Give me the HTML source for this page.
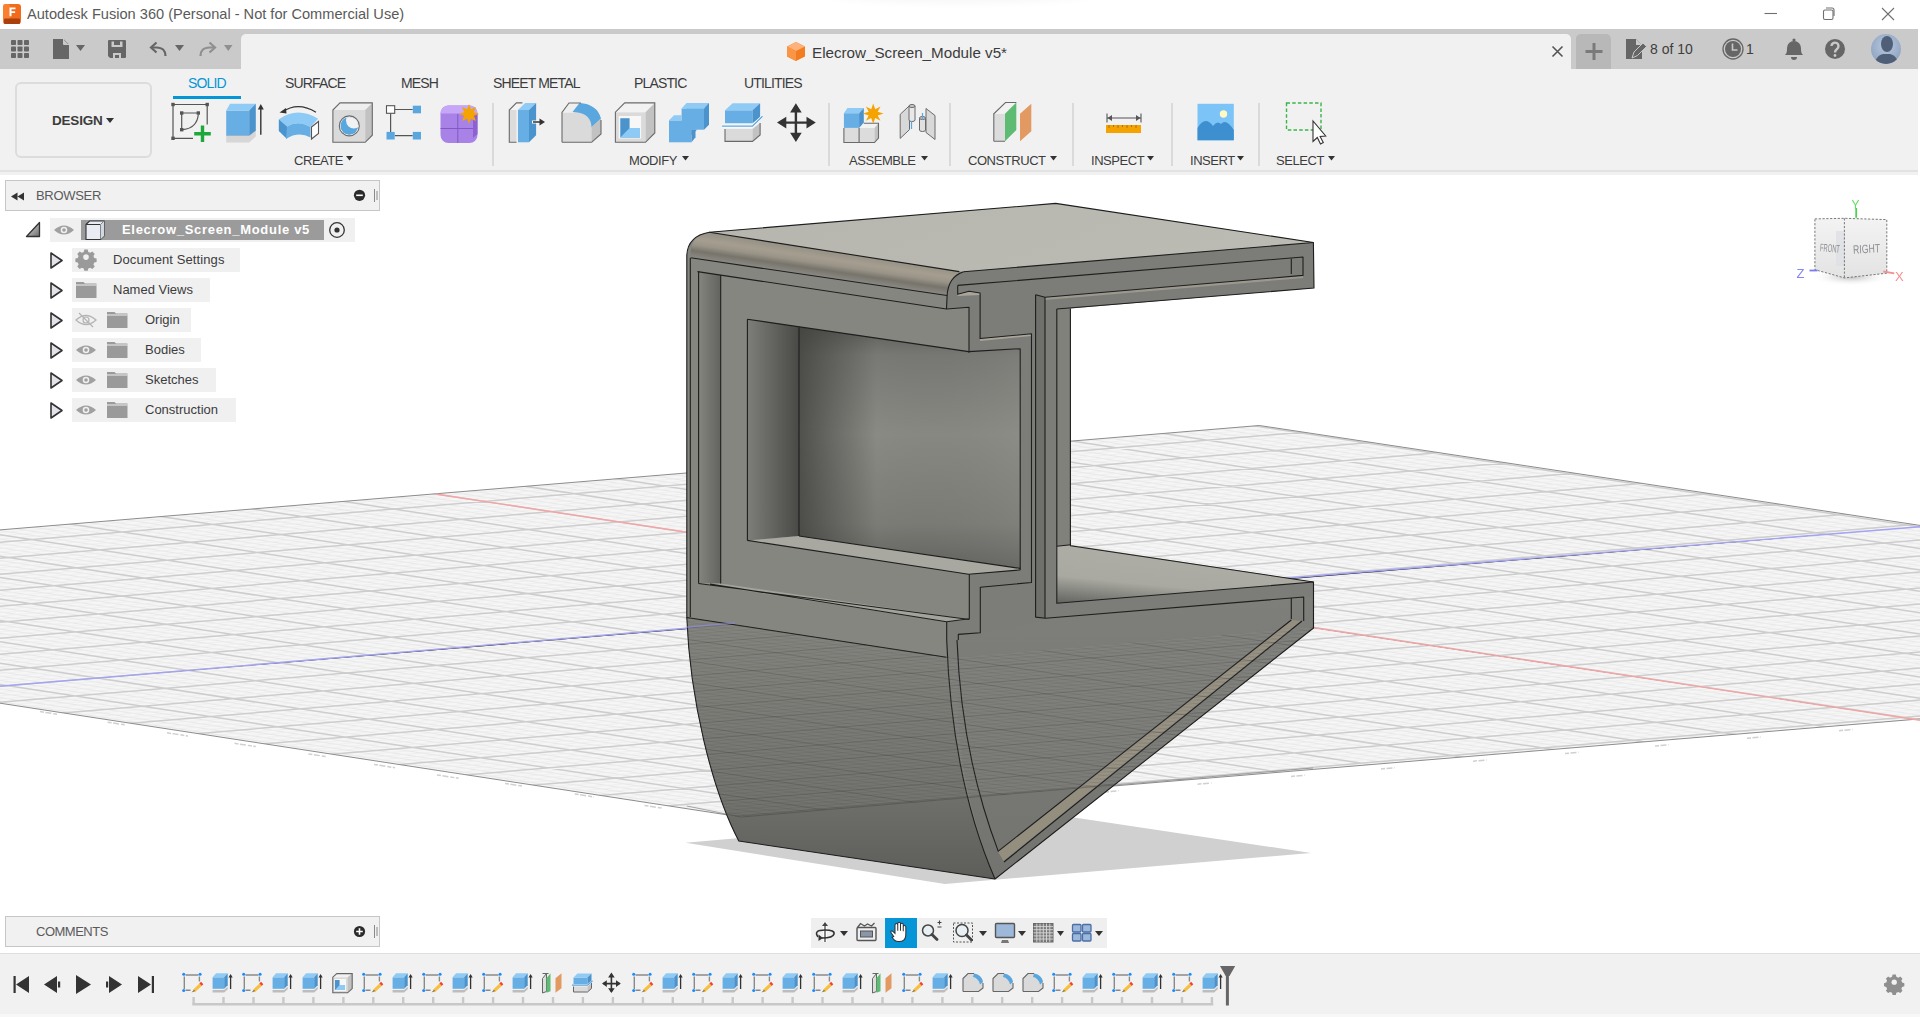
<!DOCTYPE html>
<html><head><meta charset="utf-8">
<style>
*{margin:0;padding:0;box-sizing:border-box}
html,body{width:1920px;height:1017px;overflow:hidden;background:#fff;font-family:"Liberation Sans",sans-serif;color:#3c3c3c}
.a{position:absolute}
svg{position:absolute;overflow:visible}
.t{position:absolute;white-space:nowrap;line-height:1}
#tabbar{left:0;top:29px;width:1918px;height:40px;background:#cacaca}
#doctab{left:241px;top:34px;width:1330px;height:35px;background:#f1f1f1;border-radius:5px 5px 0 0}
#plusbtn{left:1576px;top:34px;width:35px;height:35px;background:#b8b8b8;border-radius:5px 5px 0 0}
#toolbar{left:0;top:69px;width:1918px;height:106px;background:#f1f1f1}
#tbline{left:0;top:170px;width:1918px;height:2px;background:#e2e2e2}
.tab{top:75.8px;font-size:14px;letter-spacing:-0.85px;color:#3c3c3c}
.lbl{top:154px;font-size:13px;letter-spacing:-0.45px;color:#3c3c3c}
.sep{top:103px;width:2px;height:63px;background:#dadada}
#timeline{left:0;top:953px;width:1920px;height:64px;background:#f1f1f1;border-top:1px solid #dedede}
</style></head><body>
<!-- TITLE BAR -->
<svg style="left:0;top:0" width="1" height="1">
 <rect x="3" y="4" width="18" height="20" rx="3" fill="#f26b1d"/>
 <rect x="3" y="4" width="7" height="20" rx="2" fill="#ff8c3a" opacity=".6"/>
 <rect x="4" y="18.5" width="16" height="5.5" rx="1" fill="#a8410e"/>
 <path d="M9.5 7.5h6v1.8h-4v1.9h3.6v1.8h-3.6v3.2h-2z" fill="#fff"/>
 <g stroke="#707070" stroke-width="1.1" fill="none">
  <path d="M1764.5 13.5h12.5"/>
  <rect x="1823.5" y="10" width="9.5" height="9.5" rx="1.5"/>
  <path d="M1826 8h6a2 2 0 0 1 2 2v6"/>
  <path d="M1882 8l12 12M1894 8l-12 12"/>
 </g>
</svg>
<div class="a" style="left:830px;top:-16px;width:260px;height:16px;border-radius:50%;box-shadow:0 0 10px 2px rgba(0,0,0,.045)"></div>
<div class="t" style="left:27px;top:7px;font-size:14.6px;color:#5a5a5a">Autodesk Fusion 360 (Personal - Not for Commercial Use)</div>

<!-- TAB BAR -->
<div id="tabbar" class="a"></div>
<div id="doctab" class="a"></div>
<div id="plusbtn" class="a"></div>
<svg style="left:0;top:0" width="1" height="1">
 <g fill="#666">
  <rect x="11" y="40" width="5" height="5" rx=".8"/><rect x="17.5" y="40" width="5" height="5" rx=".8"/><rect x="24" y="40" width="5" height="5" rx=".8"/>
  <rect x="11" y="46.5" width="5" height="5" rx=".8"/><rect x="17.5" y="46.5" width="5" height="5" rx=".8"/><rect x="24" y="46.5" width="5" height="5" rx=".8"/>
  <rect x="11" y="53" width="5" height="5" rx=".8"/><rect x="17.5" y="53" width="5" height="5" rx=".8"/><rect x="24" y="53" width="5" height="5" rx=".8"/>
  <path d="M53 39h10.5l5.5 5.5v14.5h-16z"/>
  <path d="M76 45h9l-4.5 6z"/>
  <path d="M108 41a1 1 0 0 1 1-1h16a1 1 0 0 1 1 1v16a1 1 0 0 1-1 1h-15l-2-2zM111.5 41.5v5.5h11v-5.5h-2.5v3.5h-6v-3.5zM113 58v-5h8v5h-2v-3h-4v3z" fill-rule="evenodd"/>
  <path d="M175 45h9l-4.5 6z"/>
  <path d="M224 45h8.5l-4.25 6z" fill="#8f8f8f"/>
 </g>
 <path d="M63.5 39.5v5h5" fill="#c9c9c9"/>
 <path d="M63.5 39v5.5h5.5" fill="none" stroke="#c9c9c9" stroke-width="1"/>
 <path d="M165.5 56c0-5-3-8.5-9-8.5h-4.5" fill="none" stroke="#666" stroke-width="2.2"/>
 <path d="M156.5 42.5l-5.5 5 5.5 5" fill="none" stroke="#666" stroke-width="2.2"/>
 <path d="M200.5 56c0-5 3-8.5 9-8.5h4.5" fill="none" stroke="#8f8f8f" stroke-width="2.2"/>
 <path d="M209.5 42.5l5.5 5-5.5 5" fill="none" stroke="#8f8f8f" stroke-width="2.2"/>
</svg>
<!-- doc title -->
<svg style="left:0;top:0" width="1" height="1">
 <path d="M796 42l9 4.5v10l-9 4.5-9-4.5v-10z" fill="#f47c20"/>
 <path d="M796 42l9 4.5-9 4.5-9-4.5z" fill="#ffb27a"/>
 <path d="M787 46.5l9 4.5v10l-9-4.5z" fill="#f99545"/>
 <path d="M1552.5 46.5l10 10M1562.5 46.5l-10 10" stroke="#555" stroke-width="1.6"/>
 <path d="M1594 43v17M1585.5 51.5h17" stroke="#7a7a7a" stroke-width="3"/>
</svg>
<div class="t" style="left:812px;top:45px;font-size:15.2px;color:#3c3c3c">Elecrow_Screen_Module v5*</div>
<!-- right header -->
<svg style="left:0;top:0" width="1" height="1">
 <path d="M1626 39h10l6 6v14h-16z" fill="#666"/>
 <path d="M1636 39v6h6" fill="#c9c9c9"/>
 <path d="M1632 58l2-6 9-9 3.5 3.5-9 9z" fill="#666" stroke="#c9c9c9" stroke-width="1"/>
 <circle cx="1733" cy="49" r="10" fill="none" stroke="#666" stroke-width="1.3"/>
 <circle cx="1733" cy="49" r="8" fill="#666"/>
 <path d="M1732.5 43.5v6.5h5" fill="none" stroke="#c9c9c9" stroke-width="1.6"/>
 <path d="M1785 55c2-2 2-4 2-7a7 7 0 0 1 14 0c0 3 0 5 2 7z" fill="#666"/>
 <circle cx="1794" cy="40" r="1.6" fill="#666"/>
 <path d="M1791 57a3 3 0 0 0 6 0z" fill="#666"/>
 <circle cx="1835" cy="49" r="10" fill="#666"/>
 <path d="M1831.5 46a3.5 3.5 0 1 1 5.5 3c-1.5 1-2 1.5-2 3.5" fill="none" stroke="#c9c9c9" stroke-width="2.4"/>
 <circle cx="1835" cy="55.5" r="1.4" fill="#c9c9c9"/>
 <defs><radialGradient id="av" cx=".5" cy=".4" r=".6"><stop offset="0" stop-color="#b9c9de"/><stop offset="1" stop-color="#8fa4c2"/></radialGradient>
 <clipPath id="avc"><circle cx="1886" cy="49" r="15"/></clipPath></defs>
 <circle cx="1886" cy="49" r="15" fill="url(#av)"/>
 <g clip-path="url(#avc)" fill="#4f5f78">
  <ellipse cx="1887" cy="44" rx="6" ry="8"/>
  <path d="M1874 66c1-8 5-11 9-12h7c4 1 8 4 9 12z"/>
 </g>
</svg>
<div class="t" style="left:1650px;top:42px;font-size:14px;color:#3e3e3e">8 of 10</div>
<div class="t" style="left:1746px;top:42px;font-size:14px;color:#3e3e3e">1</div>

<!-- TOOLBAR -->
<div id="toolbar" class="a"></div>
<div id="tbline" class="a"></div>
<div class="a" style="left:15px;top:82px;width:137px;height:76px;border:2px solid #dcdcdc;border-radius:6px"></div>
<div class="t" style="left:52px;top:114px;font-size:13.5px;font-weight:bold;color:#3c3c3c;letter-spacing:-0.2px">DESIGN</div>
<svg style="left:0;top:0" width="1" height="1"><path d="M106 118h8l-4 5z" fill="#333"/></svg>

<div class="t tab" style="left:188px;color:#0696d7">SOLID</div>
<div class="a" style="left:173px;top:96px;width:68px;height:3px;background:#0696d7"></div>
<div class="t tab" style="left:285px">SURFACE</div>
<div class="t tab" style="left:401px">MESH</div>
<div class="t tab" style="left:493px">SHEET METAL</div>
<div class="t tab" style="left:634px">PLASTIC</div>
<div class="t tab" style="left:744px">UTILITIES</div>

<div class="t lbl" style="left:294px">CREATE</div>
<div class="t lbl" style="left:629px">MODIFY</div>
<div class="t lbl" style="left:849px">ASSEMBLE</div>
<div class="t lbl" style="left:968px">CONSTRUCT</div>
<div class="t lbl" style="left:1091px">INSPECT</div>
<div class="t lbl" style="left:1190px">INSERT</div>
<div class="t lbl" style="left:1276px">SELECT</div>
<div class="a sep" style="left:492px"></div>
<div class="a sep" style="left:828px"></div>
<div class="a sep" style="left:949px"></div>
<div class="a sep" style="left:1072px"></div>
<div class="a sep" style="left:1171px"></div>
<div class="a sep" style="left:1258px"></div>
<svg style="left:0;top:0" width="1" height="1">
 <defs>
  <linearGradient id="bl" x1="0" y1="0" x2="0" y2="1"><stop offset="0" stop-color="#6ab4e8"/><stop offset="1" stop-color="#5ba7df"/></linearGradient>
 </defs>
 <!-- arrows after labels -->
 <g fill="#333">
  <path d="M346 156h7l-3.5 4.5z"/><path d="M682 156h7l-3.5 4.5z"/><path d="M921 156h7l-3.5 4.5z"/>
  <path d="M1050 156h7l-3.5 4.5z"/><path d="M1147 156h7l-3.5 4.5z"/><path d="M1237 156h7l-3.5 4.5z"/><path d="M1328 156h7l-3.5 4.5z"/>
 </g>
 <!-- sketch -->
 <g stroke="#555" stroke-width="1.2" fill="none">
  <path d="M173 104.5h34.2M173 104.5v34M173 138.3h20M207.2 104.5v20"/>
  <path d="M181.7 113h16.6M181.7 113v16.7M198.3 114.5Q197 128 183 129.7"/>
 </g>
 <g fill="#555">
  <rect x="171.3" y="102.8" width="3.4" height="3.4"/><rect x="205.5" y="102.8" width="3.4" height="3.4"/><rect x="171.3" y="136.6" width="3.4" height="3.4"/>
  <rect x="180" y="111.3" width="3.4" height="3.4"/><rect x="196.6" y="111.3" width="3.4" height="3.4"/><rect x="180" y="128" width="3.4" height="3.4"/>
 </g>
 <path d="M202.5 125.5v16.6M194.2 133.8h16.6" stroke="#1fa83a" stroke-width="3.4"/>
 <!-- extrude -->
 <path d="M226.2 135.5h23l6.6-5v6l-6.6 6h-23z" fill="#d6d6d6"/>
 <path d="M226.2 135.5h23l6.6-5" fill="none" stroke="#bdbdbd" stroke-width="1"/>
 <path d="M226.2 110.5h23v25h-23z" fill="#66aee4"/>
 <path d="M226.2 110.5l3.8-6.7h25.8l-6.6 6.7z" fill="#8fcbf5"/>
 <path d="M249.2 110.5l6.6-6.7v26.7l-6.6 5z" fill="#4a93cc"/>
 <path d="M260.8 134.7v-28" stroke="#333" stroke-width="1.4"/><path d="M257.8 109.5l3-5.5 3 5.5z" fill="#333"/>
 <!-- revolve -->
 <path d="M282 112Q298 101 316 112.2" fill="none" stroke="#333" stroke-width="1.3"/>
 <path d="M279.5 112.5l6.5-4.5 0.5 5.5z" fill="#333"/>
 <path d="M278.8 119.3Q297.4 106 318.1 118.8L310.5 127Q298.4 120 287 126.5z" fill="#8dcaf5"/>
 <path d="M278.8 119.3L287 126.5v12.5l-8.2-8z" fill="#4a93cc"/>
 <path d="M287 126.5Q298.4 120 310.5 127v10.4Q298.4 131 286 139z" fill="#66aee4"/>
 <path d="M311.5 127l7-5.5v12l-7 5.5z" fill="#fff" stroke="#555" stroke-width="1.1"/>
 <!-- hole -->
 <path d="M332.9 110h32.3v32.3h-32.3z" fill="#dadada"/>
 <path d="M332.9 110l7.1-7.1h32.3l-7.1 7.1z" fill="#efefef"/>
 <path d="M365.2 110l7.1-7.1v32.3l-7.1 7.1z" fill="#c2c2c2"/>
 <path d="M332.9 110l7.1-7.1h32.3v32.3l-7.1 7.1h-32.3z" fill="none" stroke="#6a6a6a" stroke-width="1.1"/>
 <circle cx="349.3" cy="125.9" r="10" fill="#f2f2f2" stroke="#6a6a6a" stroke-width="1.1"/>
 <clipPath id="hc"><circle cx="349.3" cy="125.9" r="9"/></clipPath><g clip-path="url(#hc)"><circle cx="349.3" cy="125.9" r="9" fill="#5aa6df"/><circle cx="354" cy="120.5" r="8" fill="#f2f2f2"/></g>
 <!-- pattern -->
 <path d="M394.7 109.5h18M390.6 113.3v18.6M394.7 135.7h18" stroke="#555" stroke-width="1.2"/>
 <rect x="386.5" y="105.7" width="8.2" height="7.6" fill="#fff" stroke="#555" stroke-width="1.1"/>
 <rect x="412.8" y="105.7" width="8.2" height="7.6" fill="#5aa6df"/>
 <rect x="386.5" y="131.9" width="8.2" height="7.6" fill="#5aa6df"/>
 <rect x="412.8" y="131.9" width="8.2" height="7.6" fill="#5aa6df"/>
 <!-- form -->
 <rect x="440.5" y="105.5" width="37" height="37.5" rx="8" fill="#a982e8"/>
 <path d="M448 105.5h22a8 8 0 0 1 7.5 8h-37a8 8 0 0 1 7.5-8z" fill="#c6a6f7"/>
 <path d="M473 114v24l4.5-4v-20z" fill="#8d62d0"/>
 <path d="M457.8 114v29M440.5 128.5h32.5" stroke="#7e55bd" stroke-width=".9"/>
 <path d="M469 104l1.8 5.2 5.2-2.2-2.2 5.2 5.3 1.8-5.3 1.8 2.2 5.2-5.2-2.2-1.8 5.2-1.8-5.2-5.2 2.2 2.2-5.2-5.3-1.8 5.3-1.8-2.2-5.2 5.2 2.2z" fill="#f5a300"/>
 <!-- press pull -->
 <path d="M509.3 110h7.1v32.3h-7.1z" fill="#dcdcdc"/>
 <path d="M509.3 110l7.1-7.1h6l-6 7.1z" fill="#f4f4f4"/>
 <path d="M516.5 142.3h-7.2V110l7.1-7.1h6" fill="none" stroke="#6a6a6a" stroke-width="1.1"/>
 <path d="M518 110h11v32.3h-11z" fill="#66aee4"/>
 <path d="M518 110l7.2-7.1h10.9l-7.1 7.1z" fill="#8fcbf5"/>
 <path d="M529 110l7.1-7.1v32.3l-7.1 7.1z" fill="#4a93cc"/>
 <path d="M532 122h8" stroke="#fff" stroke-width="3"/>
 <path d="M533 122h7" stroke="#333" stroke-width="1.5"/><path d="M539.5 118.5l5.5 3.5-5.5 3.5z" fill="#333"/>
 <!-- fillet -->
 <path d="M562 112.5h15Q591.5 113 591.5 127v15.3H562z" fill="#dadada"/>
 <path d="M562 112.5l7-9.5h12Q597 104 601 118.5l-9.5 8.5Q591.5 113 577 112.5z" fill="#efefef"/>
 <path d="M577 112.5l-4.5-0.5 7-9Q597 104 601 118.5l-9.5 9Q591 114 577 112.5z" fill="#5aa6df"/>
 <path d="M591.5 127l9.5-8.5v15.5l-9.5 8.3z" fill="#c2c2c2"/>
 <path d="M562 142.3V112.5l7-9.5h12M591.5 142.3h-29.5M591.5 142.3l9.5-8.3v-14" fill="none" stroke="#6a6a6a" stroke-width="1.1"/>
 <!-- shell -->
 <path d="M615.4 112.2h30.1v30.1h-30.1z" fill="#dadada"/>
 <path d="M615.4 112.2l9.3-9.3h30.1l-9.3 9.3z" fill="#f2f2f2"/>
 <path d="M645.5 112.2l9.3-9.3V133l-9.3 9.3z" fill="#c2c2c2"/>
 <path d="M615.4 142.3v-30.1l9.3-9.3h30.1V133l-9.3 9.3z" fill="none" stroke="#6a6a6a" stroke-width="1.1"/>
 <rect x="618.7" y="116" width="22.4" height="22.5" fill="#f7f7f7"/>
 <path d="M620.3 118.2h9.3v9.8h10.4v9.4h-19.7z" fill="#4a93cc"/>
 <path d="M620.3 137.4l9.3-9.4h10.4v9.4z" fill="#8dcaf5"/>
 <!-- combine -->
 <path d="M669 120.4l5-5h12v-7l5-5h17.5v0l-4.5 5v0" fill="#8dcaf5"/>
 <path d="M669 120.4h22.5v21.9H669z" fill="#66aee4"/>
 <path d="M681.6 108.4H704v21.3h-22.4z" fill="#66aee4"/>
 <path d="M681.6 108.4l4.9-5.5H709l-5 5.5z" fill="#8fcbf5"/>
 <path d="M669 120.4l5-4.9h7.6v4.9z" fill="#8fcbf5"/>
 <path d="M704 108.4l5-5.5v21.9l-5 4.9z" fill="#4a93cc"/>
 <path d="M691.5 129.7h5.5l-5.5 5.5z" fill="#4a93cc"/><path d="M691.5 129.7h4v7.5l-4 5.1z" fill="#4a93cc"/>
 <!-- split -->
 <path d="M725 110.3h27.5v12.9H725z" fill="#66aee4"/>
 <path d="M725 110.3l7.6-7h27.5l-7.6 7z" fill="#8fcbf5"/>
 <path d="M752.5 110.3l7.6-7v14l-7.6 5.9z" fill="#4a93cc"/>
 <path d="M722 126.1h30.5l10-9.9" fill="none" stroke="#fff" stroke-width="2.6"/>
 <path d="M722 126.1h30.5l10-9.9" fill="none" stroke="#5aa6df" stroke-width="1.3"/>
 <path d="M725 129h27.5v12.4H725z" fill="#dadada"/>
 <path d="M752.5 129l7.6-5.9v11.8l-7.6 6.5z" fill="#c2c2c2"/>
 <path d="M725 129v12.4h27.5l7.6-6.5v-11.8" fill="none" stroke="#6a6a6a" stroke-width="1.1"/>
 <!-- move -->
 <path d="M795.9 108v29.5M782 122.6h28" stroke="#333" stroke-width="2.4"/>
 <path d="M795.9 103.3l5.8 9.3h-11.6zM795.9 142l5.8-9.3h-11.6zM777 122.6l9.3-5.8v11.6zM815.8 122.6l-9.3-5.8v11.6z" fill="#333"/>
 <!-- new component -->
 <path d="M843.9 128h30.6v14.5h-30.6z" fill="#dcdcdc"/>
 <path d="M859.1 128l4.7-4.7h14.7l-4.1 4.7z" fill="#f2f2f2"/>
 <path d="M874.5 128l4-4.7v14.7l-4 4.5z" fill="#c2c2c2"/>
 <path d="M843.9 128v14.5h30.6l4-4.5v-14.7h-14.7M859.1 128v14.5" fill="none" stroke="#6a6a6a" stroke-width="1.1"/>
 <path d="M843.9 113.2h15.2v14.7h-15.2z" fill="#66aee4"/>
 <path d="M843.9 113.2l3.5-5.2h16.4l-4.7 5.2z" fill="#8fcbf5"/>
 <path d="M859.1 113.2l4.7-5.2v14.6l-4.7 5.3z" fill="#4a93cc"/>
 <path d="M873.2 103.5l2 5.7 5.3-2.8-2.8 5.3 5.8 1.9-5.8 1.9 2.8 5.3-5.3-2.8-2 5.7-2-5.7-5.3 2.8 2.8-5.3-5.8-1.9 5.8-1.9-2.8-5.3 5.3 2.8z" fill="#f5a300"/>
 <!-- joint -->
 <path d="M900.2 114.4l9.3-8.8v24l-9.3 8.8z" fill="#d8d8d8" stroke="#6a6a6a" stroke-width="1"/>
 <path d="M909 106v14a3 1.5 0 0 0 6 0v-14" fill="#e8e8e8" stroke="#6a6a6a" stroke-width="1"/>
 <ellipse cx="912" cy="106" rx="3" ry="1.5" fill="#ccc" stroke="#6a6a6a" stroke-width="1"/>
 <path d="M926 108.5l9 7v24l-9-7z" fill="#d8d8d8" stroke="#6a6a6a" stroke-width="1"/>
 <path d="M919.5 118v12a3 1.5 0 0 0 6 0v-12" fill="#e0e0e0" stroke="#6a6a6a" stroke-width="1"/>
 <ellipse cx="922.5" cy="118" rx="3" ry="1.5" fill="#ccc" stroke="#6a6a6a" stroke-width="1"/>
 <path d="M922.5 113v7M911.5 121v8" stroke="#5aa6df" stroke-width="1.2"/>
 <!-- construct -->
 <path d="M993.8 113.8h11.2v27.5h-11.2z" fill="#dcdcdc"/>
 <path d="M993.8 113.8l11.7-11.3h10.8l-11.3 11.3z" fill="#f2f2f2"/>
 <path d="M1005 113.8l11.3-11.3V130L1005 141.3z" fill="#5dbb73"/>
 <path d="M993.8 141.3V113.8l11.7-11.3h10.8M993.8 141.3H1005" fill="none" stroke="#6a6a6a" stroke-width="1.1"/>
 <path d="M1020 113.8l11.3-10v27.5L1020 141.3z" fill="#e29a62"/>
 <!-- inspect -->
 <path d="M1107 118h34" stroke="#555" stroke-width="1.1"/>
 <path d="M1107 113.5v9M1141 113.5v9" stroke="#555" stroke-width="1.1"/>
 <path d="M1107.5 118l4.5-3v6zM1140.5 118l-4.5-3v6z" fill="#555"/>
 <rect x="1106" y="125" width="35" height="8" fill="#f5a300"/>
 <path d="M1109 125v3M1113.5 125v2M1118 125v3M1122.5 125v2M1127 125v3M1131.5 125v2M1136 125v3" stroke="#9a6a00" stroke-width=".8"/>
 <!-- insert -->
 <rect x="1197.5" y="103.8" width="36.3" height="36.5" fill="#7cc3f7"/>
 <path d="M1197.5 128Q1205 115 1213 126Q1217 120 1221 124Q1226 118 1233.8 130v10.3h-36.3z" fill="#3d8fcf"/>
 <circle cx="1223.5" cy="114" r="3.7" fill="#fffbc2"/>
 <!-- select -->
 <rect x="1286.5" y="103" width="34.5" height="27" fill="none" stroke="#3ab54a" stroke-width="1.4" stroke-dasharray="3.5 2.2"/>
 <path d="M1313 121v20.5l4.3-4 3.2 6.5 2.8-1.4-3.2-6.2 5.6-.4z" fill="#fff" stroke="#333" stroke-width="1.1"/>
</svg>


<!-- VIEWPORT -->
<svg style="left:0;top:0" width="1920" height="1017" viewBox="0 0 1920 1017">
 <defs>
  <pattern id="gminor" patternUnits="userSpaceOnUse" width="40" height="40"></pattern>
  <linearGradient id="gfil" gradientUnits="userSpaceOnUse" x1="850" y1="254" x2="846" y2="281">
   <stop offset="0" stop-color="#969186"/><stop offset=".3" stop-color="#a59e90"/><stop offset=".5" stop-color="#9a9488"/><stop offset=".72" stop-color="#77746b"/><stop offset="1" stop-color="#8c8b85"/>
  </linearGradient>
  <linearGradient id="gtop" x1="0" y1="0" x2="1" y2="0.3">
   <stop offset="0" stop-color="#b6b6ae"/><stop offset="1" stop-color="#bbbbb3"/>
  </linearGradient>
  <radialGradient id="gwin" cx=".42" cy=".5" r=".62">
   <stop offset="0" stop-color="#8c8c86"/><stop offset=".55" stop-color="#82827c"/><stop offset="1" stop-color="#5d5e5a"/>
  </radialGradient>
  <linearGradient id="gwinv" x1="0" y1="0" x2="0" y2="1">
   <stop offset="0" stop-color="#555652"/><stop offset=".14" stop-color="#787874"/><stop offset=".45" stop-color="#8a8a85"/><stop offset=".8" stop-color="#7c7c77"/><stop offset="1" stop-color="#5e5f5b"/>
  </linearGradient>
  <linearGradient id="gwinh" gradientUnits="userSpaceOnUse" x1="799" y1="0" x2="1020" y2="0">
   <stop offset="0" stop-color="#3c3d39" stop-opacity=".75"/><stop offset=".35" stop-color="#3c3d39" stop-opacity="0"/><stop offset="1" stop-color="#9a9a95" stop-opacity=".15"/>
  </linearGradient>
  <linearGradient id="gwl" x1="0" y1="0" x2="1" y2="0">
   <stop offset="0" stop-color="#7d7e79"/><stop offset="1" stop-color="#494a46"/>
  </linearGradient>
  <linearGradient id="grl" x1="0" y1="0" x2="1" y2="0">
   <stop offset="0" stop-color="#85857f"/><stop offset="1" stop-color="#62635f"/>
  </linearGradient>
  <linearGradient id="glow" x1="0" y1="0" x2="0" y2="1">
   <stop offset="0" stop-color="#80807b"/><stop offset=".7" stop-color="#6e6e6a"/><stop offset="1" stop-color="#5d5d5a"/>
  </linearGradient>
  <linearGradient id="gweb" x1="0" y1="0" x2="0" y2="1">
   <stop offset="0" stop-color="#7e7f7a"/><stop offset="1" stop-color="#73746f"/>
  </linearGradient>
  <linearGradient id="gbp" x1="0" y1="1" x2=".35" y2=".2">
   <stop offset="0" stop-color="#62635f"/><stop offset=".5" stop-color="#a9a9a1"/><stop offset="1" stop-color="#adada5"/>
  </linearGradient>
  <clipPath id="gridclip"><path d="M0 529.9L1259.3 425.5L1920 525.4V718.9L741 817L0 703.2z"/></clipPath>
  <clipPath id="silclip"><path d="M686.8 255Q688 236 709.3 232.3L1055.7 203.4L1313.4 242.5L1314 288L1070.4 308.6V545.7L1313.5 582V628L995 879L738.8 841C712 790 690 700 686.8 617.5z"/></clipPath><clipPath id="halfclip"><path d="M600 612L686.8 617.5L952 658L1313.5 627L1400 620V950H600z"/></clipPath><clipPath id="lowclip"><path d="M686.8 617.5L946.5 657.2L946.7 640C950 730 965 810 995 879L1313.5 628V598L1045 618L980 633L958 634L946.5 622L686.8 590z"/></clipPath>
 </defs>
 <!-- grid -->
 <path d="M0 529.9L1259.3 425.5L1920 525.4V718.9L741 817L0 703.2z" fill="#f6f6f6"/>
 <g clip-path="url(#gridclip)" id="gridlines"><path d="M0 218.1L1920 509.9M0 222.4L1920 514.2M0 226.7L1920 518.5M0 230.9L1920 522.8M0 239.5L1920 531.3M0 243.8L1920 535.6M0 248.1L1920 539.9M0 252.3L1920 544.2M0 260.9L1920 552.7M0 265.2L1920 557.0M0 269.5L1920 561.3M0 273.7L1920 565.6M0 282.3L1920 574.1M0 286.6L1920 578.4M0 290.9L1920 582.7M0 295.1L1920 587.0M0 303.7L1920 595.5M0 308.0L1920 599.8M0 312.3L1920 604.1M0 316.5L1920 608.4M0 325.1L1920 616.9M0 329.4L1920 621.2M0 333.7L1920 625.5M0 337.9L1920 629.8M0 346.5L1920 638.3M0 350.8L1920 642.6M0 355.1L1920 646.9M0 359.3L1920 651.2M0 367.9L1920 659.7M0 372.2L1920 664.0M0 376.5L1920 668.3M0 380.7L1920 672.6M0 389.3L1920 681.1M0 393.6L1920 685.4M0 397.9L1920 689.7M0 402.1L1920 694.0M0 410.7L1920 702.5M0 415.0L1920 706.8M0 419.3L1920 711.1M0 423.5L1920 715.4M0 432.1L1920 723.9M0 436.4L1920 728.2M0 440.7L1920 732.5M0 444.9L1920 736.8M0 453.5L1920 745.3M0 457.8L1920 749.6M0 462.1L1920 753.9M0 466.3L1920 758.2M0 474.9L1920 766.7M0 479.2L1920 771.0M0 483.5L1920 775.3M0 487.7L1920 779.6M0 496.3L1920 788.1M0 500.6L1920 792.4M0 504.9L1920 796.7M0 509.1L1920 801.0M0 517.7L1920 809.5M0 522.0L1920 813.8M0 526.3L1920 818.1M0 530.5L1920 822.4M0 539.1L1920 830.9M0 543.4L1920 835.2M0 547.7L1920 839.5M0 551.9L1920 843.8M0 560.5L1920 852.3M0 564.8L1920 856.6M0 569.1L1920 860.9M0 573.3L1920 865.2M0 581.9L1920 873.7M0 586.2L1920 878.0M0 590.5L1920 882.3M0 594.7L1920 886.6M0 603.3L1920 895.1M0 607.6L1920 899.4M0 611.9L1920 903.7M0 616.1L1920 908.0M0 624.7L1920 916.5M0 629.0L1920 920.8M0 633.3L1920 925.1M0 637.5L1920 929.4M0 646.1L1920 937.9M0 650.4L1920 942.2M0 654.7L1920 946.5M0 658.9L1920 950.8M0 667.5L1920 959.3M0 671.8L1920 963.6M0 676.1L1920 967.9M0 680.3L1920 972.2M0 688.9L1920 980.7M0 693.2L1920 985.0M0 697.5L1920 989.3M0 701.7L1920 993.6M0 710.3L1920 1002.1M0 714.6L1920 1006.4M0 718.9L1920 1010.7M0 723.1L1920 1015.0" stroke="#e3e3e3" stroke-width="0.8" fill="none"/><path d="M0 513.5L1920 351.1M0 516.7L1920 354.3M0 519.9L1920 357.5M0 523.1L1920 360.7M0 529.5L1920 367.1M0 532.7L1920 370.3M0 535.9L1920 373.5M0 539.1L1920 376.7M0 545.5L1920 383.1M0 548.7L1920 386.3M0 551.9L1920 389.5M0 555.1L1920 392.7M0 561.5L1920 399.1M0 564.7L1920 402.3M0 567.9L1920 405.5M0 571.1L1920 408.7M0 577.5L1920 415.1M0 580.7L1920 418.3M0 583.9L1920 421.5M0 587.1L1920 424.7M0 593.5L1920 431.1M0 596.7L1920 434.3M0 599.9L1920 437.5M0 603.1L1920 440.7M0 609.5L1920 447.1M0 612.7L1920 450.3M0 615.9L1920 453.5M0 619.1L1920 456.7M0 625.5L1920 463.1M0 628.7L1920 466.3M0 631.9L1920 469.5M0 635.1L1920 472.7M0 641.5L1920 479.1M0 644.7L1920 482.3M0 647.9L1920 485.5M0 651.1L1920 488.7M0 657.5L1920 495.1M0 660.7L1920 498.3M0 663.9L1920 501.5M0 667.1L1920 504.7M0 673.5L1920 511.1M0 676.7L1920 514.3M0 679.9L1920 517.5M0 683.1L1920 520.7M0 689.5L1920 527.1M0 692.7L1920 530.3M0 695.9L1920 533.5M0 699.1L1920 536.7M0 705.5L1920 543.1M0 708.7L1920 546.3M0 711.9L1920 549.5M0 715.1L1920 552.7M0 721.5L1920 559.1M0 724.7L1920 562.3M0 727.9L1920 565.5M0 731.1L1920 568.7M0 737.5L1920 575.1M0 740.7L1920 578.3M0 743.9L1920 581.5M0 747.1L1920 584.7M0 753.5L1920 591.1M0 756.7L1920 594.3M0 759.9L1920 597.5M0 763.1L1920 600.7M0 769.5L1920 607.1M0 772.7L1920 610.3M0 775.9L1920 613.5M0 779.1L1920 616.7M0 785.5L1920 623.1M0 788.7L1920 626.3M0 791.9L1920 629.5M0 795.1L1920 632.7M0 801.5L1920 639.1M0 804.7L1920 642.3M0 807.9L1920 645.5M0 811.1L1920 648.7M0 817.5L1920 655.1M0 820.7L1920 658.3M0 823.9L1920 661.5M0 827.1L1920 664.7M0 833.5L1920 671.1M0 836.7L1920 674.3M0 839.9L1920 677.5M0 843.1L1920 680.7M0 849.5L1920 687.1M0 852.7L1920 690.3M0 855.9L1920 693.5M0 859.1L1920 696.7M0 865.5L1920 703.1M0 868.7L1920 706.3M0 871.9L1920 709.5M0 875.1L1920 712.7M0 881.5L1920 719.1M0 884.7L1920 722.3M0 887.9L1920 725.5M0 891.1L1920 728.7M0 897.5L1920 735.1M0 900.7L1920 738.3M0 903.9L1920 741.5M0 907.1L1920 744.7" stroke="#ededed" stroke-width="0.8" fill="none"/><path d="M0 213.8L1920 505.7M0 235.2L1920 527.1M0 256.6L1920 548.5M0 278.0L1920 569.9M0 299.4L1920 591.3M0 320.8L1920 612.7M0 342.2L1920 634.1M0 363.6L1920 655.5M0 385.0L1920 676.9M0 406.4L1920 698.3M0 427.8L1920 719.7M0 449.2L1920 741.1M0 470.6L1920 762.5M0 492.0L1920 783.9M0 513.4L1920 805.3M0 534.8L1920 826.7M0 556.2L1920 848.1M0 577.6L1920 869.5M0 599.0L1920 890.9M0 620.4L1920 912.3M0 641.8L1920 933.7M0 663.2L1920 955.1M0 684.6L1920 976.5M0 706.0L1920 997.9M0 510.3L1920 347.9M0 526.3L1920 363.9M0 542.3L1920 379.9M0 558.3L1920 395.9M0 574.3L1920 411.9M0 590.3L1920 427.9M0 606.3L1920 443.9M0 622.3L1920 459.9M0 638.3L1920 475.9M0 654.3L1920 491.9M0 670.3L1920 507.9M0 686.3L1920 523.9M0 702.3L1920 539.9M0 718.3L1920 555.9M0 734.3L1920 571.9M0 750.3L1920 587.9M0 766.3L1920 603.9M0 782.3L1920 619.9M0 798.3L1920 635.9M0 814.3L1920 651.9M0 830.3L1920 667.9M0 846.3L1920 683.9M0 862.3L1920 699.9M0 878.3L1920 715.9M0 894.3L1920 731.9" stroke="#cdcdcd" stroke-width="1.5" fill="none"/></g>
 <path d="M0 529.9L1259.3 425.5L1920 525.4M1920 718.9L741 817L0 703.2" fill="none" stroke="#8c8c8c" stroke-width="1"/>
 <path d="M435.4 494L1092.6 593.9L1920 720.3" stroke="#f4a4a4" stroke-width="1.4"/>
 <path d="M0 686.3L1092.6 593.9L1920 526.8" stroke="#a4a4f4" stroke-width="1.4"/>
 <path d="M40.0 711.6l17.0 2.6M107.7 722.2l17.1 2.6M167.0 732.8l21.0 3.2M234.5 743.3l21.3 3.3M308.4 753.9l17.2 2.6M374.0 764.5l21.0 3.2M437.0 775.0l21.7 3.3M505.0 783.5l17.0 2.6M574.7 794.0l19.3 3.0M644.5 805.5l17.1 2.6M1105.0 792.0l14 -1.2M1197.5 784.2l14 -1.2M1291.0 776.4l14 -1.2M1381.0 768.9l14 -1.2M1473.0 761.2l14 -1.2M1565.0 753.5l14 -1.2M1655.0 746.0l14 -1.2M1747.0 738.3l14 -1.2M1839.0 730.7l14 -1.2" stroke="#8a8a8a" stroke-width="1.5" stroke-dasharray="4 1.5 6 2" opacity=".4" fill="none"/>
 <!-- shadow -->
 <path d="M685.5 842.8L945 884L1311 853L1082.5 818.8L950 800L740 838z" fill="#d0d0d0"/>
 <!-- model silhouette -->
 <path d="M686.8 255Q688 236 709.3 232.3L1055.7 203.4L1313.4 242.5L1314 288L1070.4 308.6V545.7L1313.5 582V628L995 879L738.8 841C712 790 690 700 686.8 617.5z" fill="#868681"/>
 <!-- top surface -->
 <path d="M709.3 232.3L1055.7 203.4L1313.4 242.5L963.6 271.8L959.3 271.6z" fill="url(#gtop)"/>
 <!-- fillet -->
 <path d="M709.3 232.3L960 271.7Q948 278 947 295.5L690.6 257.8Q689 236 709.3 232.3z" fill="url(#gfil)"/>
 <!-- YZ face -->
 <path d="M947 296Q948 276 963.6 271.8L1313.4 242.5L1314 288L1056.8 309V603.2L1313.5 582V628L995 879C968 810 952 740 946.7 657V621.8L969.3 618.7V574.6L1020.5 569.9L1020.9 348L969 352.7V307.2L946.5 308z" fill="#7c7d78"/>
 <!-- channel wall faces -->
 <path d="M1035.6 294.8L1045 297.2V618.2L1035.4 617.1z" fill="#6f706c"/>
 <path d="M1056.8 309L1070.4 308.6V545.7L1056.7 546.3z" fill="#80817b"/>
 <!-- bottom plate top surface -->
 <path d="M1056.7 546.3L1070.8 544.7L1313.5 582L1056.8 603.2z" fill="url(#gbp)"/>
 <!-- recess left wall -->
 <path d="M698.6 271.6L720.7 275V583.5L698.6 583.5z" fill="url(#grl)"/>
 <!-- window -->
 <path d="M747.4 319.2L968.6 351.6L1020.2 348.7V569.9L968.6 574.3L747.4 540.4z" fill="url(#gwinv)"/>
 <path d="M799 327.2L968.6 351.6L1020.2 348.7V569.9L968.6 574.3L799 536z" fill="url(#gwinh)"/>
 <path d="M747.4 319.2L799 327.2V536L747.4 540.4z" fill="url(#gwl)"/>
 <!-- sills -->
 <path d="M747.4 540.4L799 536L1020.2 568.4V569.9L968.6 574.3z" fill="#a8a8a0"/>
 <path d="M698.6 583.5L720.7 583.5L969.3 619.5L946.5 621.8z" fill="#a3a39b"/>
 <!-- slot floors -->
 <path d="M957.7 294.2L969 291.3L980.1 293L980.1 295L957.7 296z" fill="#a9a598"/>
 <path d="M980.1 338.5L1030.9 333.8V336L980.1 341z" fill="#a9a598"/>
 <path d="M1045 297.2L1303 275.4V278L1045 300z" fill="#9b988d"/>
 <!-- lower XY face -->
 <path d="M686.8 617.5L946.5 657.2L946.7 640C950 730 965 810 995 879L738.8 841C712 790 690 700 686.8 617.5z" fill="url(#glow)"/>
 <!-- web lower YZ -->
 <path d="M958.3 634.4L980.3 632.8L1031.5 624L1045.6 618.2L1303.7 597L1313.5 598V628L995 879C968 810 952 740 958.3 640z" fill="url(#gweb)"/>
 <!-- diagonal slot -->
 <path d="M1291.3 620L1301 620.9L1003.5 861L998 851.4z" fill="#948e7f"/>
 <!-- edges -->
 <g fill="none" stroke="#1e1e1e" stroke-width="1.1" stroke-linejoin="round">
  <path d="M686.8 255Q688 236 709.3 232.3L1055.7 203.4L1313.4 242.5L1314 288L1056.8 309"/>
  <path d="M709.3 232.3L959.3 271.6"/>
  <path d="M963.6 271.8L1313.4 242.5"/>
  <path d="M963.6 271.8Q948 277 947.1 296L946.5 309"/>
  <path d="M690.6 257.8L947 295.5"/>
  <path d="M697.5 271.6L946.5 309L969 307.2V352.7"/>
  <path d="M686.8 255V617.5C690 700 712 790 738.8 841L995 879L1313.5 628V582L1070.4 545.7V308.6"/>
  <path d="M698.6 271.6V583.5M720.7 275V583.5M690.3 258V617"/>
  <path d="M747.4 319.2L968.6 351.6L1020.2 348.7V569.9M747.4 319.2V540.4M799 327.2V536"/>
  <path d="M747.4 540.4L968.6 574.3L1020.2 569.9M799 536L1020.2 568.4"/>
  <path d="M698.6 583.5L969.3 619.5M710 584L946.5 621.8"/>
  <path d="M686.8 617.5L946.5 657.2"/>
  <path d="M946.7 640V621.8L969.3 618.7V574.3"/>
  <path d="M957.7 285.4L1303 257V275.4L1045 297.2L1035.6 294.8"/>
  <path d="M957.7 285.4V294.2L969 291.3L980.1 293V338.5L1031.5 333.8V582.5L980.3 587.2V632.8L958.3 634.4V640"/>
  <path d="M1291.3 258.4V274M1291.3 597.9V619"/>
  <path d="M1035.6 294.8V617.1L1045.6 618.2L1303.7 597V621M1045 297.2V618.2M1056.8 309V603.2L1313.5 582M1056.7 546.3L1070.8 544.7"/>
  <path d="M946.7 640C950 730 965 810 995 879"/>
  <path d="M957 640C960 720 975 790 998.3 851.4"/>
  <path d="M1291.3 620L998 851.4M1302 621L1004 862"/>
 </g>
<g clip-path="url(#silclip)"><g clip-path="url(#halfclip)"><g clip-path="url(#gridclip)">
 <rect x="600" y="550" width="800" height="400" fill="#fff" opacity=".04"/>
 <path d="M0 218.1L1920 509.9M0 222.4L1920 514.2M0 226.7L1920 518.5M0 230.9L1920 522.8M0 239.5L1920 531.3M0 243.8L1920 535.6M0 248.1L1920 539.9M0 252.3L1920 544.2M0 260.9L1920 552.7M0 265.2L1920 557.0M0 269.5L1920 561.3M0 273.7L1920 565.6M0 282.3L1920 574.1M0 286.6L1920 578.4M0 290.9L1920 582.7M0 295.1L1920 587.0M0 303.7L1920 595.5M0 308.0L1920 599.8M0 312.3L1920 604.1M0 316.5L1920 608.4M0 325.1L1920 616.9M0 329.4L1920 621.2M0 333.7L1920 625.5M0 337.9L1920 629.8M0 346.5L1920 638.3M0 350.8L1920 642.6M0 355.1L1920 646.9M0 359.3L1920 651.2M0 367.9L1920 659.7M0 372.2L1920 664.0M0 376.5L1920 668.3M0 380.7L1920 672.6M0 389.3L1920 681.1M0 393.6L1920 685.4M0 397.9L1920 689.7M0 402.1L1920 694.0M0 410.7L1920 702.5M0 415.0L1920 706.8M0 419.3L1920 711.1M0 423.5L1920 715.4M0 432.1L1920 723.9M0 436.4L1920 728.2M0 440.7L1920 732.5M0 444.9L1920 736.8M0 453.5L1920 745.3M0 457.8L1920 749.6M0 462.1L1920 753.9M0 466.3L1920 758.2M0 474.9L1920 766.7M0 479.2L1920 771.0M0 483.5L1920 775.3M0 487.7L1920 779.6M0 496.3L1920 788.1M0 500.6L1920 792.4M0 504.9L1920 796.7M0 509.1L1920 801.0M0 517.7L1920 809.5M0 522.0L1920 813.8M0 526.3L1920 818.1M0 530.5L1920 822.4M0 539.1L1920 830.9M0 543.4L1920 835.2M0 547.7L1920 839.5M0 551.9L1920 843.8M0 560.5L1920 852.3M0 564.8L1920 856.6M0 569.1L1920 860.9M0 573.3L1920 865.2M0 581.9L1920 873.7M0 586.2L1920 878.0M0 590.5L1920 882.3M0 594.7L1920 886.6M0 603.3L1920 895.1M0 607.6L1920 899.4M0 611.9L1920 903.7M0 616.1L1920 908.0M0 624.7L1920 916.5M0 629.0L1920 920.8M0 633.3L1920 925.1M0 637.5L1920 929.4M0 646.1L1920 937.9M0 650.4L1920 942.2M0 654.7L1920 946.5M0 658.9L1920 950.8M0 667.5L1920 959.3M0 671.8L1920 963.6M0 676.1L1920 967.9M0 680.3L1920 972.2M0 688.9L1920 980.7M0 693.2L1920 985.0M0 697.5L1920 989.3M0 701.7L1920 993.6M0 710.3L1920 1002.1M0 714.6L1920 1006.4M0 718.9L1920 1010.7M0 723.1L1920 1015.0M0 513.5L1920 351.1M0 516.7L1920 354.3M0 519.9L1920 357.5M0 523.1L1920 360.7M0 529.5L1920 367.1M0 532.7L1920 370.3M0 535.9L1920 373.5M0 539.1L1920 376.7M0 545.5L1920 383.1M0 548.7L1920 386.3M0 551.9L1920 389.5M0 555.1L1920 392.7M0 561.5L1920 399.1M0 564.7L1920 402.3M0 567.9L1920 405.5M0 571.1L1920 408.7M0 577.5L1920 415.1M0 580.7L1920 418.3M0 583.9L1920 421.5M0 587.1L1920 424.7M0 593.5L1920 431.1M0 596.7L1920 434.3M0 599.9L1920 437.5M0 603.1L1920 440.7M0 609.5L1920 447.1M0 612.7L1920 450.3M0 615.9L1920 453.5M0 619.1L1920 456.7M0 625.5L1920 463.1M0 628.7L1920 466.3M0 631.9L1920 469.5M0 635.1L1920 472.7M0 641.5L1920 479.1M0 644.7L1920 482.3M0 647.9L1920 485.5M0 651.1L1920 488.7M0 657.5L1920 495.1M0 660.7L1920 498.3M0 663.9L1920 501.5M0 667.1L1920 504.7M0 673.5L1920 511.1M0 676.7L1920 514.3M0 679.9L1920 517.5M0 683.1L1920 520.7M0 689.5L1920 527.1M0 692.7L1920 530.3M0 695.9L1920 533.5M0 699.1L1920 536.7M0 705.5L1920 543.1M0 708.7L1920 546.3M0 711.9L1920 549.5M0 715.1L1920 552.7M0 721.5L1920 559.1M0 724.7L1920 562.3M0 727.9L1920 565.5M0 731.1L1920 568.7M0 737.5L1920 575.1M0 740.7L1920 578.3M0 743.9L1920 581.5M0 747.1L1920 584.7M0 753.5L1920 591.1M0 756.7L1920 594.3M0 759.9L1920 597.5M0 763.1L1920 600.7M0 769.5L1920 607.1M0 772.7L1920 610.3M0 775.9L1920 613.5M0 779.1L1920 616.7M0 785.5L1920 623.1M0 788.7L1920 626.3M0 791.9L1920 629.5M0 795.1L1920 632.7M0 801.5L1920 639.1M0 804.7L1920 642.3M0 807.9L1920 645.5M0 811.1L1920 648.7M0 817.5L1920 655.1M0 820.7L1920 658.3M0 823.9L1920 661.5M0 827.1L1920 664.7M0 833.5L1920 671.1M0 836.7L1920 674.3M0 839.9L1920 677.5M0 843.1L1920 680.7M0 849.5L1920 687.1M0 852.7L1920 690.3M0 855.9L1920 693.5M0 859.1L1920 696.7M0 865.5L1920 703.1M0 868.7L1920 706.3M0 871.9L1920 709.5M0 875.1L1920 712.7M0 881.5L1920 719.1M0 884.7L1920 722.3M0 887.9L1920 725.5M0 891.1L1920 728.7M0 897.5L1920 735.1M0 900.7L1920 738.3M0 903.9L1920 741.5M0 907.1L1920 744.7" stroke="#1a1a1a" stroke-width="0.8" fill="none" opacity=".07"/>
 <path d="M0 213.8L1920 505.7M0 235.2L1920 527.1M0 256.6L1920 548.5M0 278.0L1920 569.9M0 299.4L1920 591.3M0 320.8L1920 612.7M0 342.2L1920 634.1M0 363.6L1920 655.5M0 385.0L1920 676.9M0 406.4L1920 698.3M0 427.8L1920 719.7M0 449.2L1920 741.1M0 470.6L1920 762.5M0 492.0L1920 783.9M0 513.4L1920 805.3M0 534.8L1920 826.7M0 556.2L1920 848.1M0 577.6L1920 869.5M0 599.0L1920 890.9M0 620.4L1920 912.3M0 641.8L1920 933.7M0 663.2L1920 955.1M0 684.6L1920 976.5M0 706.0L1920 997.9M0 510.3L1920 347.9M0 526.3L1920 363.9M0 542.3L1920 379.9M0 558.3L1920 395.9M0 574.3L1920 411.9M0 590.3L1920 427.9M0 606.3L1920 443.9M0 622.3L1920 459.9M0 638.3L1920 475.9M0 654.3L1920 491.9M0 670.3L1920 507.9M0 686.3L1920 523.9M0 702.3L1920 539.9M0 718.3L1920 555.9M0 734.3L1920 571.9M0 750.3L1920 587.9M0 766.3L1920 603.9M0 782.3L1920 619.9M0 798.3L1920 635.9M0 814.3L1920 651.9M0 830.3L1920 667.9M0 846.3L1920 683.9M0 862.3L1920 699.9M0 878.3L1920 715.9M0 894.3L1920 731.9" stroke="#1a1a1a" stroke-width="1" fill="none" opacity=".17"/>
</g></g></g>
 <path d="M686.8 627.1L735 623" stroke="#8c8cf0" stroke-width="1.2" opacity=".7"/>
 <!-- grid front edge through model -->
 <path d="M686.8 806L741 817L1313 768" stroke="#3a3a38" stroke-width=".8" opacity=".5" fill="none"/>
</svg>
<svg style="left:0;top:0" width="1" height="1">
 <defs>
  <radialGradient id="vcsh" cx=".5" cy=".5" r=".5"><stop offset="0" stop-color="#bdbdbd"/><stop offset="1" stop-color="#fff" stop-opacity="0"/></radialGradient>
  <linearGradient id="vcf" x1="0" y1="0" x2="0" y2="1"><stop offset="0" stop-color="#f3f3f3"/><stop offset="1" stop-color="#e3e3e3"/></linearGradient>
  <filter id="bl1" x="-10%" y="-10%" width="120%" height="120%"><feGaussianBlur stdDeviation=".45"/></filter>
 </defs>
 <g filter="url(#bl1)">
 <ellipse cx="1851" cy="277" rx="40" ry="9" fill="url(#vcsh)"/>
 <path d="M1814.9 218.9L1844.4 218.3V277.9L1814.9 269.7z" fill="url(#vcf)"/>
 <path d="M1844.4 218.3L1886.8 219.6V273.2L1844.4 277.9z" fill="url(#vcf)"/>
 <rect x="1836" y="231" width="9" height="35" fill="#dde0e4" opacity=".8"/>
 <path d="M1814.9 218.9L1844.4 218.3L1886.8 219.6V273.2L1844.4 277.9L1814.9 269.7z M1844.4 218.3V277.9" fill="none" stroke="#6a6a6a" stroke-width=".9" stroke-dasharray="2.2 1.6"/>
 <text x="1853" y="253" font-family="Liberation Sans" font-size="12" fill="#8a8c90" transform="rotate(-3 1866 247)" textLength="27" lengthAdjust="spacingAndGlyphs">RIGHT</text>
 <text x="1820" y="252" font-family="Liberation Sans" font-size="11" fill="#8a8c90" transform="rotate(4 1830 247)" textLength="20" lengthAdjust="spacingAndGlyphs">FRONT</text>
 <path d="M1856.2 217.8V208" stroke="#4fd14f" stroke-width="1.8"/>
 <text x="1851.5" y="209" font-family="Liberation Sans" font-size="12" fill="#5ee05e">Y</text>
 <path d="M1809.5 270.5h8" stroke="#7a7af5" stroke-width="1.8"/>
 <text x="1796.5" y="277.5" font-family="Liberation Sans" font-size="13" fill="#8585f5">Z</text>
 <path d="M1883.3 271.5l11 1.8" stroke="#f59090" stroke-width="1.8"/>
 <text x="1895" y="280.5" font-family="Liberation Sans" font-size="13" fill="#f59090">X</text>
 </g>
</svg>



<!-- BROWSER PANEL -->
<div class="a" style="left:5px;top:180px;width:375px;height:31px;border:1px solid #c6c6c6;background:#f1f1f1"></div>
<div class="t" style="left:36px;top:189px;font-size:13px;color:#5a5a5a;letter-spacing:-0.3px">BROWSER</div>
<div class="a" style="left:5px;top:916px;width:375px;height:31px;border:1px solid #c6c6c6;background:#f1f1f1"></div>
<div class="t" style="left:36px;top:925px;font-size:13px;color:#5a5a5a;letter-spacing:-0.5px">COMMENTS</div>
<div class="a" style="left:50px;top:218px;width:305px;height:24px;background:#f0f0f0"></div>
<div class="a" style="left:81px;top:220px;width:243px;height:20px;background:#9b9b9b"></div>
<div class="a" style="left:72px;top:248px;width:168px;height:24px;background:#f0f0f0"></div>
<div class="a" style="left:72px;top:278px;width:138px;height:24px;background:#f0f0f0"></div>
<div class="a" style="left:72px;top:308px;width:119px;height:24px;background:#f0f0f0"></div>
<div class="a" style="left:72px;top:338px;width:129px;height:24px;background:#f0f0f0"></div>
<div class="a" style="left:72px;top:368px;width:144px;height:24px;background:#f0f0f0"></div>
<div class="a" style="left:72px;top:398px;width:164px;height:24px;background:#f0f0f0"></div>
<div class="t" style="left:122px;top:223px;font-size:13px;font-weight:bold;color:#fff;letter-spacing:0.7px">Elecrow_Screen_Module v5</div>
<div class="t" style="left:113px;top:253px;font-size:13px;color:#3c3c3c;letter-spacing:0.1px">Document Settings</div>
<div class="t" style="left:113px;top:283px;font-size:13px;color:#3c3c3c">Named Views</div>
<div class="t" style="left:145px;top:313px;font-size:13px;color:#3c3c3c">Origin</div>
<div class="t" style="left:145px;top:343px;font-size:13px;color:#3c3c3c">Bodies</div>
<div class="t" style="left:145px;top:373px;font-size:13px;color:#3c3c3c">Sketches</div>
<div class="t" style="left:145px;top:403px;font-size:13px;color:#3c3c3c">Construction</div>
<svg style="left:0;top:0" width="1" height="1">
 <defs>
  <symbol id="eye" overflow="visible"><path d="M0 6Q10 -3 20 6Q10 15 0 6z" fill="#a0a0a0"/><circle cx="10" cy="6" r="3.3" fill="#f0f0f0"/><circle cx="10" cy="6" r="1.8" fill="#a0a0a0"/></symbol>
  <symbol id="fold" overflow="visible"><path d="M0 0h7.5l1.5 1.5h11.5v14.5h-20.5z" fill="#9a9a9a"/><path d="M0 3h20.5" stroke="#f0f0f0" stroke-width="1"/></symbol>
  <symbol id="exp" overflow="visible"><path d="M1 1l11 7.5-11 7.5z" fill="#e3e4ea" stroke="#333" stroke-width="1.6" stroke-linejoin="round"/></symbol>
  <linearGradient id="trg" x1="0" y1="0" x2="1" y2="1"><stop offset="0" stop-color="#e6e6e6"/><stop offset="1" stop-color="#6c6c6c"/></linearGradient>
 </defs>
 <path d="M17.5 196.5l6.5-4v8zM11 196.5l6.5-4v8z" fill="#333"/>
 <rect x="12" y="192.5" width="1.6" height="8" fill="#333" opacity="0"/>
 <circle cx="359.5" cy="195.3" r="5.6" fill="#2b2b2b"/><path d="M356.2 195.3h6.6" stroke="#fff" stroke-width="1.6"/>
 <path d="M374.5 189v13M377 191v9" stroke="#8a8a8a" stroke-width="1"/>
 <circle cx="359.5" cy="931.5" r="5.6" fill="#2b2b2b"/><path d="M356.2 931.5h6.6M359.5 928.2v6.6" stroke="#fff" stroke-width="1.6"/>
 <path d="M374.5 925v13M377 927v9" stroke="#8a8a8a" stroke-width="1"/>
 <!-- root row -->
 <path d="M26.5 236.5h13v-14z" fill="url(#trg)" stroke="#333" stroke-width="1.3" stroke-linejoin="round"/>
 <use href="#eye" x="54" y="224"/>
 <path d="M86 224.5l3.5-3.5h14.5v15l-3.5 3.5h-14.5z" fill="#e9edf3" stroke="#333" stroke-width="1.1"/>
 <path d="M86 224.5h14.5v14.5M100.5 224.5l3.5-3.5" fill="none" stroke="#333" stroke-width="1"/>
 <path d="M100.5 224.5l3.5-3.5v15l-3.5 3.5z" fill="#d2d8e2"/>
 <circle cx="337" cy="230" r="7.3" fill="none" stroke="#333" stroke-width="1.3"/><circle cx="337" cy="230" r="2.6" fill="#333"/>
 <!-- rows -->
 <use href="#exp" x="50" y="252"/><use href="#exp" x="50" y="282"/><use href="#exp" x="50" y="312"/>
 <use href="#exp" x="50" y="342"/><use href="#exp" x="50" y="372"/><use href="#exp" x="50" y="402"/>
 <g transform="translate(86 257.1) scale(.78)" fill="#9a9a9a">
  <path d="M-2.2 -9.6h4.4l.7 3 2.6 1.1 2.6-1.7 3.1 3.1-1.7 2.6 1.1 2.6 3 .7v4.4l-3 .7-1.1 2.6 1.7 2.6-3.1 3.1-2.6-1.7-2.6 1.1-.7 3h-4.4l-.7-3-2.6-1.1-2.6 1.7-3.1-3.1 1.7-2.6-1.1-2.6-3-.7v-4.4l3-.7 1.1-2.6-1.7-2.6 3.1-3.1 2.6 1.7 2.6-1.1z"/>
  <circle r="3.6" fill="#f0f0f0"/>
 </g>
 <use href="#fold" x="76" y="282"/>
 <use href="#fold" x="107" y="312"/><use href="#fold" x="107" y="342"/><use href="#fold" x="107" y="372"/><use href="#fold" x="107" y="402"/>
 <g opacity=".75"><path d="M76 320Q86 311 96 320Q86 329 76 320z" fill="none" stroke="#a0a0a0" stroke-width="1.3"/><circle cx="86" cy="320" r="3" fill="none" stroke="#a0a0a0" stroke-width="1.2"/><path d="M79 313l14 14" stroke="#a0a0a0" stroke-width="1.3"/></g>
 <use href="#eye" x="76" y="344"/><use href="#eye" x="76" y="374"/><use href="#eye" x="76" y="404"/>
</svg>


<!-- NAV BAR -->
<div class="a" style="left:811px;top:918px;width:296px;height:30px;background:#efefef"></div>
<div class="a" style="left:885px;top:918px;width:32px;height:30px;background:#0696d7"></div>
<svg style="left:0;top:0" width="1" height="1">
 <g fill="#333">
  <path d="M840 931h8l-4 5z"/><path d="M979 931h8l-4 5z"/><path d="M1018 931h8l-4 5z"/><path d="M1057 931h7l-3.5 5z"/><path d="M1095 931h8l-4 5z"/>
 </g>
 <!-- orbit -->
 <path d="M825 922v20" stroke="#fff" stroke-width="3.5"/><path d="M825 923v19" stroke="#444" stroke-width="1.3"/><path d="M822 926l3-4 3 4z" fill="#444"/>
 <path d="M818 937Q813 930 825 930Q835 930 834 934Q833 938 822 938" fill="none" stroke="#333" stroke-width="1.6"/>
 <path d="M818.5 934.5l4.5 3.5-4.5 3z" fill="#333"/>
 <!-- capture -->
 <rect x="857" y="927.5" width="19" height="13" rx="1" fill="none" stroke="#555" stroke-width="1.4"/>
 <rect x="860.5" y="931" width="12" height="6" fill="#8a95a8" stroke="#555" stroke-width="1"/>
 <path d="M857.5 927.5l3-4 4 2.5 3-2 4 2 3-3" fill="none" stroke="#555" stroke-width="1.3"/>
 <!-- hand -->
 <g transform="translate(898 934) scale(.86) translate(-898 -932)"><path d="M893 935l-3-4.5q-1-2 1-2.3l3.5 3v-9.5q0-1.8 1.6-1.8t1.6 1.8v6.5-8q0-1.8 1.6-1.8t1.6 1.8v8-7q0-1.8 1.6-1.8t1.6 1.8v7.5-5q0-1.7 1.5-1.7t1.5 1.7v9q0 8-7 8h-2q-4 0-7-5z" fill="#fff" stroke="#333" stroke-width="1.2"/></g>
 <!-- zoom -->
 <circle cx="928" cy="930.5" r="5.5" fill="#e8f0f4" stroke="#444" stroke-width="1.5"/>
 <path d="M932 934.5l5 5" stroke="#444" stroke-width="2.8" stroke-linecap="round"/>
 <path d="M937.5 922.5h4M939.5 920.5v4M937.5 927h4" stroke="#444" stroke-width="1.1"/>
 <!-- zoom fit -->
 <rect x="953.5" y="923" width="19" height="19" fill="none" stroke="#555" stroke-width="1" stroke-dasharray="2 1.5"/>
 <circle cx="962" cy="930.5" r="6" fill="#e8f0f4" stroke="#444" stroke-width="1.5"/>
 <path d="M966.5 935l5 5" stroke="#444" stroke-width="2.8" stroke-linecap="round"/>
 <!-- display -->
 <rect x="995.5" y="923.5" width="19" height="14" rx="1" fill="#9db8d8" stroke="#555" stroke-width="1.4"/>
 <path d="M1002 940h6l1 3h-8z" fill="#777"/>
 <!-- grid -->
 <rect x="1033.5" y="923.5" width="19.5" height="18.5" fill="#7c7c7c" stroke="#666" stroke-width="1"/>
 <path d="M1036.8 923.5v18.5M1040 923.5v18.5M1043.3 923.5v18.5M1046.5 923.5v18.5M1049.8 923.5v18.5M1033.5 926.6h19.5M1033.5 929.7h19.5M1033.5 932.8h19.5M1033.5 935.9h19.5M1033.5 939h19.5" stroke="#d8d8d8" stroke-width=".9"/>
 <!-- viewports -->
 <g fill="#9db8d8" stroke="#4a6ea8" stroke-width="1.3">
  <rect x="1072.5" y="924.5" width="8.5" height="7.5" rx="1"/><rect x="1082.5" y="924.5" width="8.5" height="7.5" rx="1"/>
  <rect x="1072.5" y="933.5" width="8.5" height="7.5" rx="1"/><rect x="1082.5" y="933.5" width="8.5" height="7.5" rx="1"/>
 </g>
</svg>


<!-- TIMELINE -->
<div id="timeline" class="a"></div>
<div class="a" style="left:0;top:1014px;width:1920px;height:3px;background:#f7f7f7"></div>
<svg style="left:0;top:0" width="1" height="1">
 <defs>
  <symbol id="tS" overflow="visible">
   <path d="M3.5 3h13M2.3 4.5v12.5M17.4 4.5v5M3.5 18.3h5" stroke="#8a8a8a" stroke-width="1.4" fill="none"/>
   <circle cx="1.7" cy="2.2" r="1.5" fill="#1a8cff"/><circle cx="18.1" cy="2.2" r="1.5" fill="#1a8cff"/><circle cx="1.7" cy="18.6" r="1.5" fill="#1a8cff"/>
   <path d="M11.8 19.2l7.6-7.2" stroke="#f6c143" stroke-width="3.2"/><path d="M18.6 12.6l1.6-1.6" stroke="#f0403a" stroke-width="3.2"/>
   <path d="M9.5 20.5l2.5-2.5 1 1z" fill="#555"/>
  </symbol>
  <symbol id="tE" overflow="visible">
   <path d="M.6 18h11.6l3.5-3.3v2.6l-3.5 3.2H.6z" fill="#bdbdbd"/>
   <path d="M.6 5.3h11.6v11.5H.6z" fill="#66aee4"/>
   <path d="M.6 5.3l3.5-4h11.6l-3.5 4z" fill="#8fcbf5"/>
   <path d="M12.2 5.3l3.5-4v12l-3.5 3.5z" fill="#4a93cc"/>
   <path d="M18.6 17V4" stroke="#333" stroke-width="1.3"/><path d="M16.5 5.5l2.1-3.5 2.1 3.5z" fill="#333"/>
  </symbol>
  <symbol id="tSh" overflow="visible">
   <path d="M.8 5.2h14.8v15.6H.8z" fill="#dadada"/>
   <path d="M.8 5.2l4-3.6h15.4l-4.6 3.6z" fill="#f2f2f2"/>
   <path d="M15.6 5.2l4.6-3.6v15l-4.6 4.2z" fill="#c2c2c2"/>
   <path d="M.8 20.8V5.2l4-3.6h15.4v15l-4.6 4.2z" fill="none" stroke="#666" stroke-width="1.1"/>
   <rect x="2.5" y="7" width="11.5" height="12" fill="#f7f7f7"/>
   <path d="M3 8h4.6v5h5.4v5H3z" fill="#4a93cc"/><path d="M3 18l4.6-5h5.4v5z" fill="#8dcaf5"/>
  </symbol>
  <symbol id="tP" overflow="visible">
   <path d="M.5 6.5l4-5v18l-4 1.5z" fill="#dedede" stroke="#666" stroke-width="1"/>
   <path d="M4.5 6.3l4-5v18l-4 1.5z" fill="#5dbb73"/>
   <path d="M13.5 6.3l6-5v15l-6 4.5z" fill="#e29a62"/>
   <path d="M.5 1.5h6" stroke="#666" stroke-width="1"/>
  </symbol>
  <symbol id="tSp" overflow="visible">
   <path d="M1.5 5.5h14v6.5h-14z" fill="#66aee4"/><path d="M1.5 5.5l4-4h14l-4 4z" fill="#8fcbf5"/><path d="M15.5 5.5l4-4v7l-4 3.5z" fill="#4a93cc"/>
   <path d="M0 13.2h15.5l5-4.5" fill="none" stroke="#5aa6df" stroke-width="1.2"/>
   <path d="M1.5 14.5h14v5.5h-14z" fill="#dadada"/><path d="M15.5 14.5l4-3.5v5.5l-4 3.5z" fill="#c2c2c2"/>
   <path d="M1.5 14.5v5.5h14l4-3.5v-5.5" fill="none" stroke="#666" stroke-width="1"/>
  </symbol>
  <symbol id="tM" overflow="visible">
   <path d="M9.4 3v17M1.5 11.6h16" stroke="#333" stroke-width="1.6"/>
   <path d="M9.4 .6l3.3 4.8h-6.6zM9.4 21l3.3-4.8h-6.6zM0 11.6l4.8-3.3v6.6zM18.8 11.6l-4.8-3.3v6.6z" fill="#333"/>
  </symbol>
  <symbol id="tF" overflow="visible">
   <path d="M1 6.5l5-5h6Q20 2 21 10v6l-4.5 3.5H1z" fill="#dadada"/>
   <path d="M12 1.5Q19.5 2.5 21 10l-3 2.5Q16.5 6 11 5z" fill="#5aa6df"/>
   <path d="M1 19.5V6.5l5-5h6M1 19.5h15.5l4.5-3.5v-5" fill="none" stroke="#666" stroke-width="1.1"/>
  </symbol>
 </defs>
 <!-- playback -->
 <g fill="#333">
  <rect x="13.5" y="976" width="2.2" height="17"/><path d="M29 976v17l-13-8.5z"/>
  <path d="M44 984.5l13-8.5v17z"/><rect x="58" y="981.5" width="2.2" height="6"/>
  <path d="M76 975v19l15-9.5z"/>
  <rect x="106" y="981.5" width="2.2" height="6"/><path d="M109 976v17l13-8.5z"/>
  <path d="M138 976v17l13-8.5z"/><rect x="151.8" y="976" width="2.2" height="17"/>
 </g>
 <path d="M192.3 1004.3H1213.3" stroke="#c8c8c8" stroke-width="2.6"/>
 <g stroke="#c8c8c8" stroke-width="2.4"><path d="M193.6 997v7"/><path d="M223.5 997v7"/><path d="M253.5 997v7"/><path d="M283.4 997v7"/><path d="M313.4 997v7"/><path d="M343.4 997v7"/><path d="M373.3 997v7"/><path d="M403.2 997v7"/><path d="M433.2 997v7"/><path d="M463.1 997v7"/><path d="M493.1 997v7"/><path d="M523.0 997v7"/><path d="M553.0 997v7"/><path d="M582.9 997v7"/><path d="M612.9 997v7"/><path d="M642.9 997v7"/><path d="M672.8 997v7"/><path d="M702.8 997v7"/><path d="M732.7 997v7"/><path d="M762.6 997v7"/><path d="M792.6 997v7"/><path d="M822.5 997v7"/><path d="M852.5 997v7"/><path d="M882.5 997v7"/><path d="M912.4 997v7"/><path d="M942.4 997v7"/><path d="M972.3 997v7"/><path d="M1002.2 997v7"/><path d="M1032.2 997v7"/><path d="M1062.1 997v7"/><path d="M1092.1 997v7"/><path d="M1122.0 997v7"/><path d="M1152.0 997v7"/><path d="M1182.0 997v7"/><path d="M1211.9 997v7"/></g>
 <use href="#tS" x="182" y="972"/>
 <use href="#tE" x="212" y="972"/>
 <use href="#tS" x="242" y="972"/>
 <use href="#tE" x="272" y="972"/>
 <use href="#tE" x="302" y="972"/>
 <use href="#tSh" x="332" y="972"/>
 <use href="#tS" x="362" y="972"/>
 <use href="#tE" x="392" y="972"/>
 <use href="#tS" x="422" y="972"/>
 <use href="#tE" x="452" y="972"/>
 <use href="#tS" x="482" y="972"/>
 <use href="#tE" x="512" y="972"/>
 <use href="#tP" x="542" y="972"/>
 <use href="#tSp" x="572" y="972"/>
 <use href="#tM" x="602" y="972"/>
 <use href="#tS" x="632" y="972"/>
 <use href="#tE" x="662" y="972"/>
 <use href="#tS" x="692" y="972"/>
 <use href="#tE" x="722" y="972"/>
 <use href="#tS" x="752" y="972"/>
 <use href="#tE" x="782" y="972"/>
 <use href="#tS" x="812" y="972"/>
 <use href="#tE" x="842" y="972"/>
 <use href="#tP" x="872" y="972"/>
 <use href="#tS" x="902" y="972"/>
 <use href="#tE" x="932" y="972"/>
 <use href="#tF" x="962" y="972"/>
 <use href="#tF" x="992" y="972"/>
 <use href="#tF" x="1022" y="972"/>
 <use href="#tS" x="1052" y="972"/>
 <use href="#tE" x="1082" y="972"/>
 <use href="#tS" x="1112" y="972"/>
 <use href="#tE" x="1142" y="972"/>
 <use href="#tS" x="1172" y="972"/>
 <use href="#tE" x="1202" y="972"/>
 <path d="M1220 966h15.2l-5.7 10h-3.8z" fill="#666"/>
 <rect x="1225.9" y="975" width="3" height="30.5" fill="#666"/>
 <!-- settings gear -->
 <g transform="translate(1894.2 982.2) scale(.8)" fill="#8f8f8f">
  <path d="M-2 -9.5h4l.7 2.8 2.5 1 2.4-1.5 2.8 2.8-1.5 2.4 1 2.5 2.8.7v4l-2.8.7-1 2.5 1.5 2.4-2.8 2.8-2.4-1.5-2.5 1-.7 2.8h-4l-.7-2.8-2.5-1-2.4 1.5-2.8-2.8 1.5-2.4-1-2.5-2.8-.7v-4l2.8-.7 1-2.5-1.5-2.4 2.8-2.8 2.4 1.5 2.5-1z"/>
  <circle r="3.3" fill="#f1f1f1"/>
 </g>
</svg>

</body></html>
